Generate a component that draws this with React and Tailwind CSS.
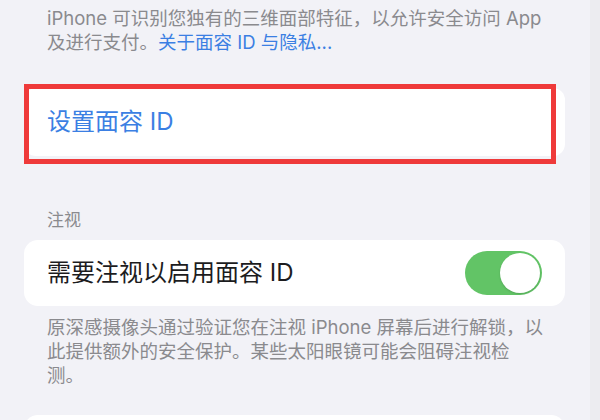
export default function App() {
  return (
    <div className="w-[600px] h-[420px] overflow-hidden flex bg-[#f2f2f7] font-['Inter','Noto_Sans_CJK_SC',sans-serif]">
      <div className="w-[590px] shrink-0 flex flex-col">
        {/* Intro text */}
        <p className="shrink-0 pt-[6px] pl-[47px] text-[18.5px] leading-[24px] text-[#8a8a8e] whitespace-nowrap">
          iPhone 可识别您独有的三维面部特征，以允许安全访问 App
          <br />
          及进行支付。<span className="text-[#3b7fe3]">关于面容 ID 与隐私...</span>
        </p>

        {/* Set up Face ID */}
        <div className="relative shrink-0 mt-[34px] ml-[24px] w-[541px] h-[68px] bg-white rounded-[12px] flex items-center pl-[23px]">
          <span className="text-[24px] text-[#3b7fe3]">设置面容 ID</span>
          <div className="absolute left-0 top-[-4px] w-[532px] h-[80px] border-[5px] border-[#ef3a3a]" />
        </div>

        {/* Attention section */}
        <div className="shrink-0 mt-[53px] pl-[47px] text-[17px] leading-[22px] text-[#8a8a8e]">注视</div>
        <div className="shrink-0 mt-[9px] ml-[24px] w-[541px] h-[66px] bg-white rounded-[14px] flex items-center justify-between pl-[23px] pr-[23px]">
          <span className="text-[24px] text-[#1c1c1e]">需要注视以启用面容 ID</span>
          <div className="w-[77px] h-[44px] rounded-full bg-[#62c466] p-[2px] flex justify-end">
            <div className="w-[40px] h-[40px] rounded-full bg-white shadow-[0_1px_2px_rgba(0,0,0,0.15)]" />
          </div>
        </div>
        <p className="shrink-0 mt-[9px] pl-[47px] text-[18.5px] leading-[24px] text-[#8a8a8e] whitespace-nowrap">
          原深感摄像头通过验证您在注视 iPhone 屏幕后进行解锁，以
          <br />
          此提供额外的安全保护。某些太阳眼镜可能会阻碍注视检
          <br />
          测。
        </p>

        {/* Next card (cut off) */}
        <div className="shrink-0 mt-[28px] ml-[24px] w-[541px] h-[60px] bg-white rounded-[14px]" />
      </div>
      <div className="flex-1 bg-[#ececf0]" />
    </div>
  )
}
